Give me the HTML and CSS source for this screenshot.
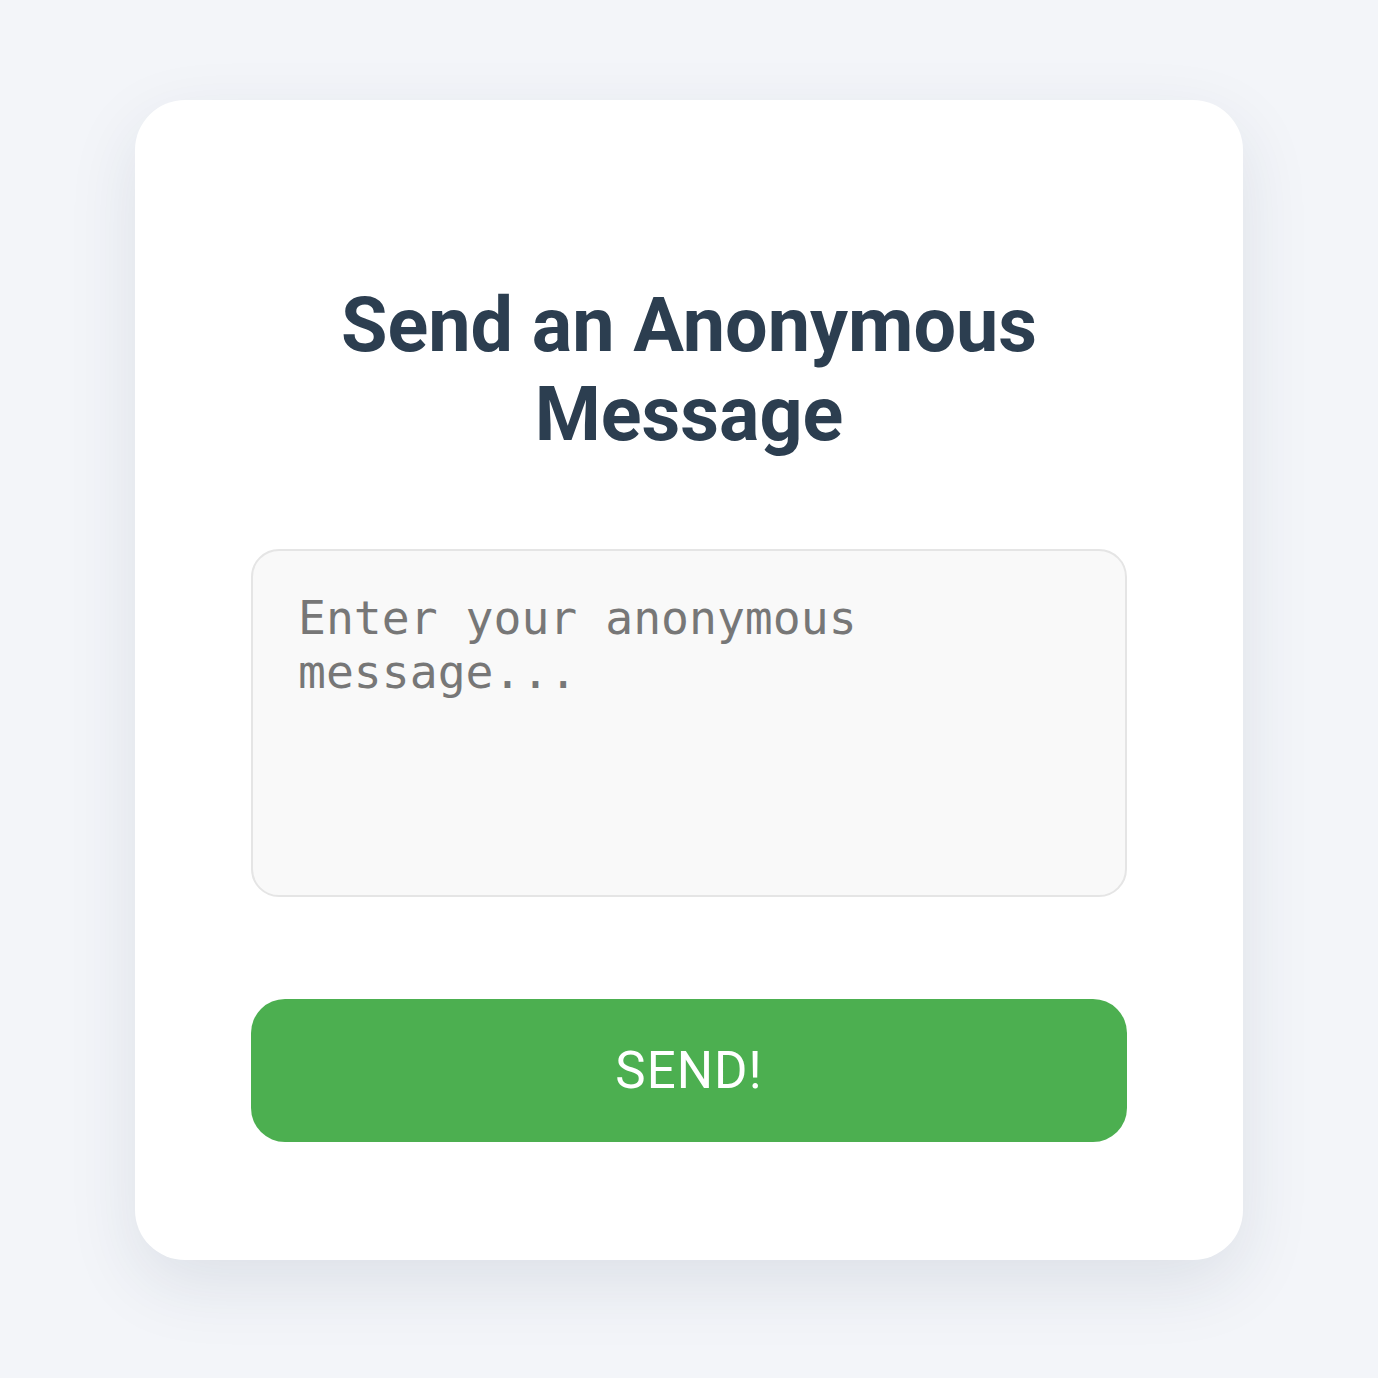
FILE: index.html
```html
<!DOCTYPE html>
<html lang="en">
<head>
<meta charset="utf-8">
<title>Send an Anonymous Message</title>
<link rel="stylesheet" href="styles.css">
</head>
<body>
<main class="page">
  <section class="card">
    <h1 class="title">Send an Anonymous Message</h1>
    <form class="form">
      <textarea class="message" placeholder="Enter your anonymous message..."></textarea>
      <button type="button" class="send">SEND!</button>
    </form>
  </section>
</main>
</body>
</html>
```

FILE: styles.css
```css
html, body {
  margin: 0;
  padding: 0;
  background: #f3f5f9;
}

.page {
  display: flex;
  justify-content: center;
  padding-top: 100px;
  min-height: 1378px;
  box-sizing: border-box;
}

.card {
  width: 1108px;
  height: 1160px;
  box-sizing: border-box;
  background: #ffffff;
  border-radius: 50px;
  box-shadow: 0 24px 70px rgba(30, 45, 80, 0.10);
  padding: 181px 116px 118px;
  display: flex;
  flex-direction: column;
}

.title {
  margin: 0;
  font-family: Roboto, "Liberation Sans", sans-serif;
  font-weight: 700;
  font-size: 75.5px;
  line-height: 89px;
  color: #2c3e50;
  text-align: center;
  padding: 0 60px;
}

.form {
  display: flex;
  flex-direction: column;
  margin-top: 90px;
}

.message {
  width: 876px;
  height: 348px;
  box-sizing: border-box;
  background: #f9f9f9;
  border: 2px solid #e5e5e5;
  border-radius: 28px;
  padding: 40px 45px;
  font-family: "DejaVu Sans Mono", monospace;
  font-size: 46.4px;
  line-height: 54px;
  color: #333;
  resize: none;
  outline: none;
  margin: 0;
}

.message::placeholder {
  color: #777777;
}

.send {
  margin-top: 102px;
  width: 876px;
  height: 143px;
  border: none;
  border-radius: 34px;
  background: #4caf50;
  color: #ffffff;
  font-family: Roboto, "Liberation Sans", sans-serif;
  font-weight: 400;
  font-size: 51px;
  letter-spacing: 1px;
  cursor: pointer;
}
```
